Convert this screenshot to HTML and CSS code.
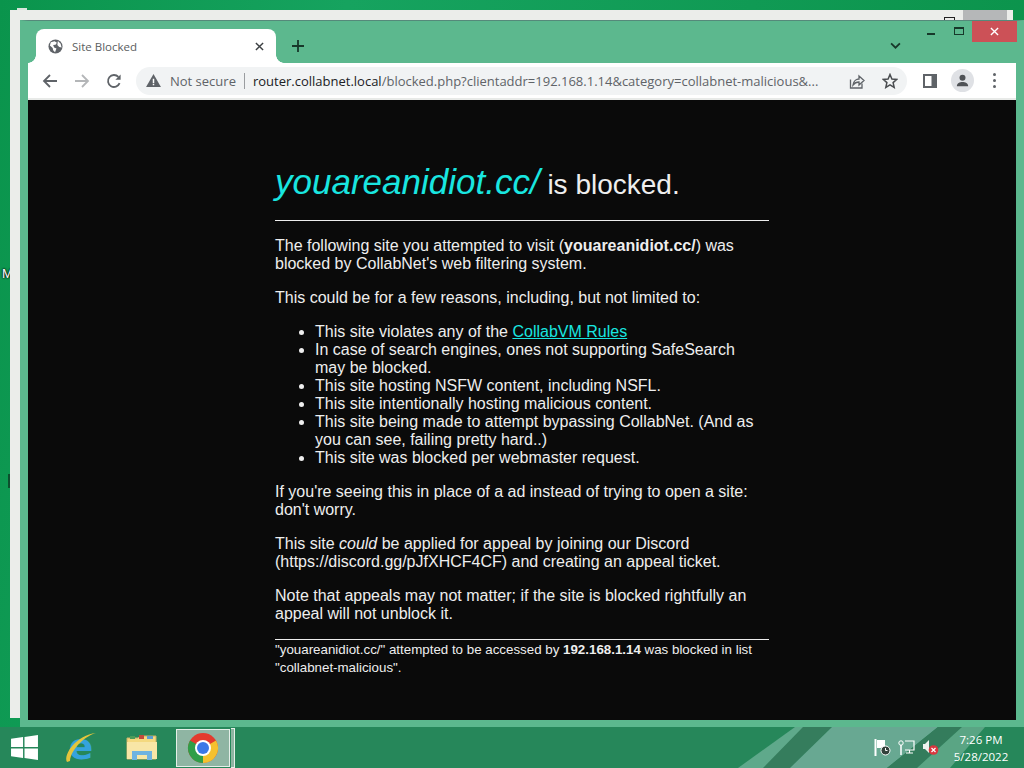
FILE: index.html
```html
<!DOCTYPE html>
<html lang="en">
<head>
  <meta charset="UTF-8">
  <title>Site Blocked</title>
  <link rel="stylesheet" href="styles.css">
</head>
<body>
  <div class="desktop">
    <span class="desk-letter">M</span>
    <span class="desk-corner"></span>
    <span class="desk-mark"></span>

    <!-- window behind chrome -->
    <div class="back-window">
      <span class="back-max"></span>
      <span class="back-close"></span>
    </div>

    <div class="chrome">
      <div class="tabstrip">
        <div class="tab">
          <svg class="favicon" viewBox="0 0 16 16"><circle cx="8" cy="8" r="7.5" fill="#5f6368"/><path d="M3 3.5 7 2.5 9.5 4 8 6 5.5 6.5 6.5 9 9 10 7.5 14 5.5 12 5 9.5 2 7Z M10.5 2 13.5 5 14.5 9 12 8.5 10 6.5Z" fill="#fff"/></svg>
          <span class="tab-title">Site Blocked</span>
          <svg class="tab-close" viewBox="0 0 10 10"><path d="M1 1 9 9M9 1 1 9" stroke="#3c4043" stroke-width="1.6"/></svg>
        </div>
        <svg class="new-tab" viewBox="0 0 12 12"><path d="M6 0V12M0 6H12" stroke="#17382a" stroke-width="1.8"/></svg>
        <svg class="tab-search" viewBox="0 0 10 6"><path d="M1 1 5 5 9 1" fill="none" stroke="#17382a" stroke-width="1.6"/></svg>
        <div class="win-controls">
          <span class="win-min"></span>
          <span class="win-max"></span>
          <span class="win-close">
            <svg viewBox="0 0 10 10"><path d="M1 1 9 9M9 1 1 9" stroke="#fff" stroke-width="1.5"/></svg>
          </span>
        </div>
      </div>

      <div class="toolbar">
        <svg class="nav-icon" viewBox="0 0 16 16"><path d="M15 8H2M8 2 2 8l6 6" fill="none" stroke="#5f6368" stroke-width="1.8"/></svg>
        <svg class="nav-icon" viewBox="0 0 16 16"><path d="M1 8H14M8 2l6 6-6 6" fill="none" stroke="#b4b6b8" stroke-width="1.8"/></svg>
        <svg class="nav-icon" viewBox="0 0 16 16"><path d="M13.6 10.2A6 6 0 1 1 12.4 3.9" fill="none" stroke="#5f6368" stroke-width="1.8"/><path d="M14.6 1.6V6.8H9.4Z" fill="#5f6368"/></svg>
        <div class="omnibox">
          <svg class="warn" viewBox="0 0 16 14"><path d="M8 0 16 14H0Z" fill="#5f6368"/><path d="M7.2 5h1.6v4.6H7.2ZM7.2 10.6h1.6v1.6H7.2Z" fill="#fff"/></svg>
          <span class="not-secure">Not secure</span>
          <span class="omni-sep"></span>
          <span class="url"><span class="url-host">router.collabnet.local</span>/blocked.php?clientaddr=192.168.1.14&amp;category=collabnet-malicious&amp;...</span>
          <svg class="omni-icon" viewBox="0 0 16 16"><path d="M1.5 6.5V15H13V10.5" fill="none" stroke="#5f6368" stroke-width="1.3"/><path d="M4 12C4.500 8 7.500 6 10 6V3l5 4.500-5 4.500V9C7.500 9 5.500 10 4 12Z" fill="none" stroke="#5f6368" stroke-width="1.3"/></svg>
          <svg class="omni-icon" viewBox="0 0 16 16"><path d="M8 1.500 9.900 6 14.800 6.400 11.100 9.600 12.200 14.400 8 11.900 3.800 14.400 4.900 9.600 1.200 6.400 6.100 6Z" fill="none" stroke="#4a4d50" stroke-width="1.500"/></svg>
        </div>
        <svg class="side-icon" viewBox="0 0 14 14"><path d="M0 0H14V14H0Z" fill="#5f6368"/><path d="M2 2H8.500V12H2Z" fill="#fff"/></svg>
        <div class="avatar">
          <svg viewBox="0 0 16 16"><circle cx="8" cy="5" r="3.200" fill="#4f5256"/><path d="M2 14C2 10.500 5 9.500 8 9.500S14 10.500 14 14Z" fill="#4f5256"/></svg>
        </div>
        <div class="menu-dots"><span></span><span></span><span></span></div>
      </div>

      <main class="page">
        <div class="notice">
          <h1><em class="site">youareanidiot.cc/</em> is blocked.</h1>
          <hr class="head-rule">
          <p>The following site you attempted to visit (<b>youareanidiot.cc/</b>) was blocked by CollabNet's web filtering system.</p>
          <p>This could be for a few reasons, including, but not limited to:</p>
          <ul>
            <li>This site violates any of the <a href="#">CollabVM Rules</a></li>
            <li>In case of search engines, ones not supporting SafeSearch may be blocked.</li>
            <li>This site hosting NSFW content, including NSFL.</li>
            <li>This site intentionally hosting malicious content.</li>
            <li>This site being made to attempt bypassing CollabNet. (And as you can see, failing pretty hard..)</li>
            <li>This site was blocked per webmaster request.</li>
          </ul>
          <p>If you're seeing this in place of a ad instead of trying to open a site: don't worry.</p>
          <p>This site <i>could</i> be applied for appeal by joining our Discord (https://discord.gg/pJfXHCF4CF) and creating an appeal ticket.</p>
          <p>Note that appeals may not matter; if the site is blocked rightfully an appeal will not unblock it.</p>
          <hr class="foot-rule">
          <div class="foot">"youareanidiot.cc/" attempted to be accessed by <b>192.168.1.14</b> was blocked in list "collabnet-malicious".</div>
        </div>
      </main>
    </div>

    <footer class="taskbar">
      <svg class="streaks" viewBox="0 0 1024 41" preserveAspectRatio="none">
        <path d="M738 41 795 0H805L765 41Z" fill="#5fa98b"/>
        <path d="M763 41 803 0H832L790 41Z" fill="#357d5d"/>
        <path d="M790 41 832 0H938L887 41Z" fill="#68a892"/>
        <path d="M887 41 938 0H962L917 41Z" fill="#347c5c"/>
        <path d="M917 41 962 0H985L950 41Z" fill="#5aa584"/>
      </svg>
      <svg class="start" viewBox="0 0 28 26"><path d="M0 4 12.500 2.200V12.400H0ZM14 2 28 0V12.400H14ZM0 14H12.500V23.800L0 22ZM14 14H28V26L14 24Z" fill="#fff"/></svg>
      <div class="task-btn">
        <svg viewBox="0 0 32 32"><text x="16" y="27" class="ie-e">e</text><path d="M2 30C-2 22 12 3 31 1 22 3 6 16 5 29Z" fill="#e3c53c"/></svg>
      </div>
      <div class="task-btn">
        <svg viewBox="0 0 32 30"><path d="M1 5H12L14 3H30V26H1Z" fill="#f4d97f" stroke="#c9b068"/><path d="M4 3H9V6H4Z" fill="#4d9c5a"/><path d="M13 2H18V6H13Z" fill="#c04b3c"/><path d="M21 3H27V6H21Z" fill="#5a9fd0"/><path d="M1 9H31V26H1Z" fill="#f8e6a6"/><path d="M6 27V18H26V27H21V22H11V27Z" fill="#6fb3e0"/></svg>
      </div>
      <div class="task-btn active">
        <svg viewBox="0 0 32 32"><circle cx="16" cy="16" r="15" fill="#e33b2e"/><path d="M16 16 29 8.500A15 15 0 0 1 16 31Z" fill="#f5c12e"/><path d="M16 16 16 31A15 15 0 0 1 3 8.500Z" fill="#2f9e48"/><circle cx="16" cy="16" r="8" fill="#fff"/><circle cx="16" cy="16" r="6" fill="#3b78e7"/></svg>
      </div>
      <span class="task-stack"></span>
      <div class="tray">
        <svg class="tray-icon" viewBox="0 0 17 17"><path d="M1.500 0V17" stroke="#fff" stroke-width="2"/><path d="M3 1H11V9H3Z" fill="#fff"/><circle cx="11.500" cy="11.500" r="4.500" fill="#33413b" stroke="#fff"/><path d="M11.500 9V11.500H13.500" fill="none" stroke="#fff"/></svg>
        <svg class="tray-icon" viewBox="0 0 17 17"><circle cx="3" cy="4" r="2.200" fill="none" stroke="#fff"/><path d="M3 6V16" stroke="#fff" stroke-width="1.500"/><path d="M7 2H16V11H7M11.500 11V14H8M11.500 14H15" fill="none" stroke="#fff" stroke-width="1.200"/></svg>
        <svg class="tray-icon" viewBox="0 0 17 17"><path d="M1 5H3L7 1V14L3 10H1Z" fill="#eef3ef"/><circle cx="11.500" cy="11" r="4.800" fill="#d9363e"/><path d="M9.500 9 13.500 13M13.500 9 9.500 13" stroke="#fff" stroke-width="1.200"/></svg>
        <div class="clock">
          <span>7:26 PM</span>
          <span>5/28/2022</span>
        </div>
      </div>
    </footer>
  </div>
</body>
</html>
```

FILE: styles.css
```css
/* Desktop */
html, body {
  margin: 0;
  padding: 0;
  overflow: hidden;
}

.desktop {
  position: relative;
  width: 1024px;
  height: 768px;
  overflow: hidden;
  background: linear-gradient(100deg, #0a944c 0%, #16a35f 30%, #0a9149 100%);
  font-family: "Liberation Sans", Arial, sans-serif;
}

.desk-letter {
  position: absolute;
  left: 2px;
  top: 266px;
  font-size: 13px;
  color: #fff;
  text-shadow: 0 0 2px #000, 0 0 2px #000;
}

.desk-corner {
  position: absolute;
  left: 17px;
  top: 8px;
  width: 10px;
  height: 2px;
  background: #d8e6dc;
}

.desk-mark {
  position: absolute;
  left: 8px;
  top: 474px;
  width: 2px;
  height: 14px;
  background: #0d4f2e;
}

.back-window {
  position: absolute;
  left: 10px;
  top: 10px;
  width: 1003px;
  height: 708px;
  background: #ebedea;
}

.back-max {
  position: absolute;
  left: 934px;
  top: 7px;
  width: 9px;
  height: 3px;
  border: 1px solid #222;
}

.back-close {
  position: absolute;
  left: 953px;
  top: 0;
  width: 44px;
  height: 10px;
  background: #b5b7b8;
}

/* Chrome window */
.chrome {
  position: absolute;
  left: 20px;
  top: 20px;
  width: 988px;
  height: 699px;
  border: 8px solid #5cb88e;
  border-top: 1px solid #55897a;
  background: #5cb88e;
  display: flex;
  flex-direction: column;
}

.tabstrip {
  position: relative;
  height: 42px;
  flex: none;
  display: flex;
  align-items: flex-end;
}

.tab {
  position: relative;
  width: 240px;
  height: 34px;
  margin-left: 8px;
  background: #fff;
  border-radius: 8px 8px 0 0;
  display: flex;
  align-items: center;
  padding: 0 12px;
  box-sizing: border-box;
}

/* the flared feet of the tab */
.tab::before,
.tab::after {
  content: "";
  position: absolute;
  bottom: 0;
  width: 8px;
  height: 8px;
}

.tab::before {
  left: -8px;
  background: radial-gradient(circle at 0 0, transparent 7.5px, #fff 8px);
}

.tab::after {
  right: -8px;
  background: radial-gradient(circle at 100% 0, transparent 7.5px, #fff 8px);
}

.favicon {
  width: 15px;
  height: 15px;
  flex: none;
}

.tab-title {
  margin-left: 9px;
  font-family: "Open Sans", "Noto Sans", sans-serif;
  font-size: 11.5px;
  color: #5a5d60;
  flex: 1;
}

.tab-close {
  width: 9px;
  height: 9px;
  flex: none;
}

.new-tab {
  width: 12px;
  height: 12px;
  margin: 0 0 11px 16px;
}

.tab-search {
  position: absolute;
  left: 862px;
  top: 21px;
  width: 11px;
  height: 7px;
}

.win-controls {
  position: absolute;
  right: -1px;
  top: 0;
  display: flex;
  align-items: flex-start;
}

.win-min {
  width: 8px;
  height: 2px;
  margin: 12px 19px 0 0;
  background: #17382a;
}

.win-max {
  width: 8px;
  height: 5px;
  margin: 6px 8px 0 0;
  border: 1px solid #17382a;
  border-top-width: 2px;
}

.win-close {
  width: 45px;
  height: 21px;
  background: #cc5157;
  display: flex;
  align-items: center;
  justify-content: center;
}

.win-close svg {
  width: 9px;
  height: 9px;
}

/* Toolbar */
.toolbar {
  height: 35px;
  flex: none;
  background: #fff;
  border-bottom: 2px solid #e8eae8;
  display: flex;
  align-items: center;
  padding-left: 14px;
}

.nav-icon {
  width: 16px;
  height: 16px;
  margin-right: 16px;
  flex: none;
}

.omnibox {
  width: 771px;
  height: 28px;
  flex: none;
  margin-left: -2px;
  background: #f1f3f4;
  border-radius: 14px;
  display: flex;
  align-items: center;
  padding-left: 10px;
  box-sizing: border-box;
  font-family: "Open Sans", "Noto Sans", sans-serif;
  font-size: 13px;
  color: #5f6368;
}

.warn {
  width: 15px;
  height: 13px;
  flex: none;
}

.not-secure {
  margin-left: 9px;
}

.omni-sep {
  width: 1px;
  height: 16px;
  margin: 0 8px;
  background: #9a9da0;
}

.url {
  flex: 1;
  white-space: nowrap;
  overflow: hidden;
}

.url-host {
  color: #202124;
}

.omni-icon {
  width: 16px;
  height: 16px;
  flex: none;
  margin-left: 17px;
}

.omni-icon:last-child {
  margin-right: 9px;
}

.side-icon {
  width: 14px;
  height: 14px;
  margin-left: 16px;
  flex: none;
}

.avatar {
  width: 23px;
  height: 23px;
  margin-left: 14px;
  border-radius: 50%;
  background: #dfe1e5;
  display: flex;
  align-items: center;
  justify-content: center;
}

.avatar svg {
  width: 15px;
  height: 15px;
}

.menu-dots {
  margin-left: 19px;
  display: flex;
  flex-direction: column;
  gap: 3px;
}

.menu-dots span {
  width: 3px;
  height: 3px;
  border-radius: 50%;
  background: #5f6368;
}

/* Blocked page */
.page {
  flex: 1;
  background: #0a0a0a;
  color: #eee;
  font-size: 16px;
  line-height: 18px;
}

.notice {
  width: 494px;
  margin: 0 auto;
  padding-top: 62px;
}

h1 {
  margin: 0;
  font-size: 28px;
  font-weight: normal;
  line-height: 40px;
}

.site {
  font-size: 35px;
  color: #19e6e0;
}

hr {
  border: 0;
  border-top: 1px solid #eee;
}

.head-rule {
  margin: 15px 0 15px;
}

p {
  margin: 16px 0;
}

ul {
  margin: 16px 0;
  padding-left: 40px;
}

a {
  color: #19e6e0;
}

.foot-rule {
  margin: 16px 0 0;
}

.foot {
  font-size: 13.33px;
  margin-top: 1px;
}

/* Taskbar */
.taskbar {
  position: absolute;
  left: 0;
  bottom: 0;
  width: 1024px;
  height: 41px;
  background: #26875a;
  display: flex;
  align-items: center;
}

.streaks {
  position: absolute;
  left: 0;
  top: 0;
  width: 100%;
  height: 100%;
}

.start {
  position: relative;
  width: 27px;
  height: 25px;
  margin: 0 16px 0 11px;
}

.task-btn {
  position: relative;
  width: 54px;
  height: 38px;
  margin-right: 7px;
  display: flex;
  align-items: center;
  justify-content: center;
  box-sizing: border-box;
}

.task-btn svg {
  width: 32px;
  height: 32px;
  overflow: visible;
}

.ie-e {
  font-family: "DejaVu Sans", sans-serif;
  font-size: 36px;
  font-weight: bold;
  fill: #35a3dc;
  text-anchor: middle;
}

.task-btn.active {
  background: #8fb5a3;
  border: 1px solid #e6efe9;
  margin-right: 1px;
}

.task-stack {
  position: relative;
  width: 3px;
  height: 38px;
  background: #8fb5a3;
  border: 1px solid #e6efe9;
  border-left: 0;
}

.tray {
  position: relative;
  margin-left: auto;
  display: flex;
  align-items: center;
  gap: 7px;
  padding-right: 12px;
}

.tray-icon {
  width: 17px;
  height: 17px;
}

.clock {
  width: 62px;
  margin: 2px 0 0 4px;
  display: flex;
  flex-direction: column;
  align-items: center;
  gap: 3px;
  font-family: "Open Sans", "Noto Sans", sans-serif;
  font-size: 11.5px;
  line-height: 14px;
  color: #fff;
}
```
